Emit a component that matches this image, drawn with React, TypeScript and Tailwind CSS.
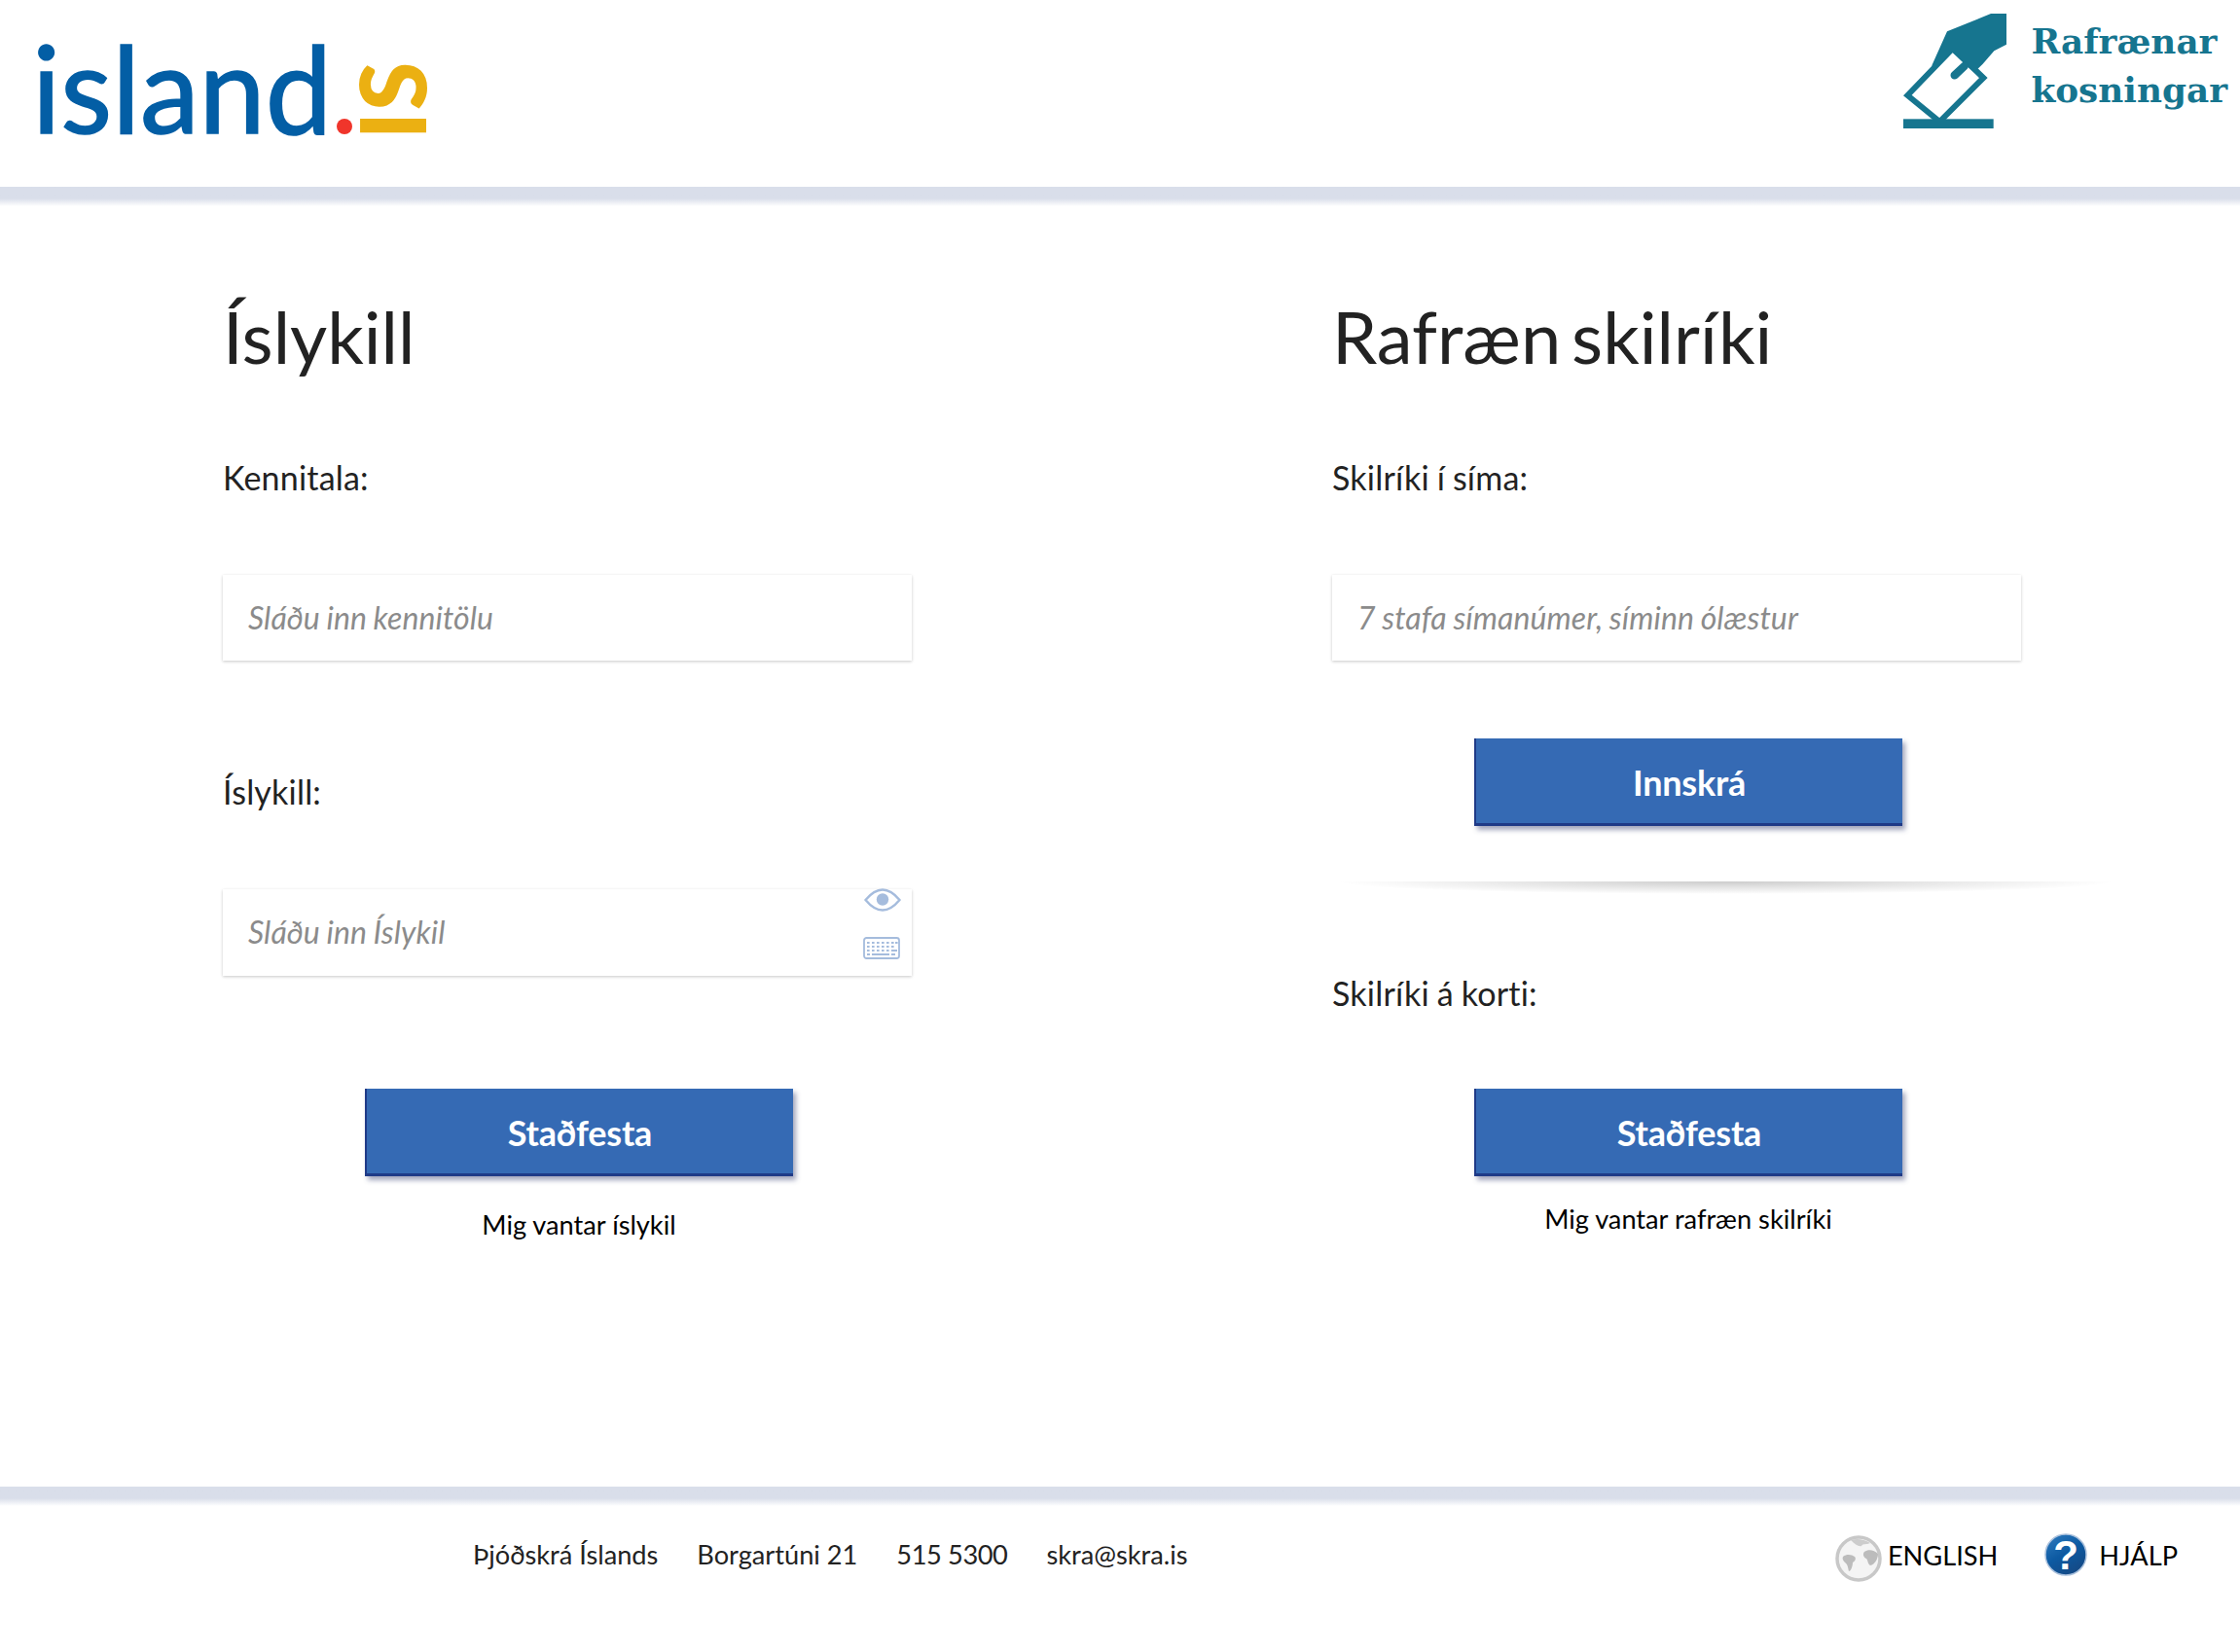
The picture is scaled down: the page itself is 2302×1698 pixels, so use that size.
import { Fragment } from 'react';

function IslandLogo() {
  return (
    <svg width="500" height="192" viewBox="0 0 500 192">
      <text x="33" y="137" fontFamily="Lato, sans-serif" fontSize="125" fill="#035ea5" stroke="#035ea5" strokeWidth="1.6" textLength="308" lengthAdjust="spacingAndGlyphs">island</text>
      <circle cx="354" cy="130" r="8" fill="#f0352b" />
      <text transform="translate(438 144) rotate(-90)" fontFamily="Lato, sans-serif" fontWeight="700" fontSize="132" fill="#ebb012" textLength="81" lengthAdjust="spacingAndGlyphs">ıs</text>
    </svg>
  );
}

function BallotLogo() {
  return (
    <svg width="118" height="120" viewBox="0 0 354 360">
      {/* ballot paper */}
      <path d="M13 252 L152 108 L247 198 L112 333 Z" fill="#fff" stroke="#16758f" strokeWidth="18" strokeLinejoin="miter" />
      {/* hand */}
      <path d="M135 55 L270 0 L318 0 L318 95 L280 115 L245 155 L222 178 L152 118 L96 172 L88 160 Z" fill="#16758f" />
      <path d="M188 162 L158 190" stroke="#16758f" strokeWidth="25" strokeLinecap="round" fill="none" />
      <rect x="0" y="325" width="278" height="29" fill="#16758f" />
    </svg>
  );
}

function Eye() {
  return (
    <svg width="38" height="24" viewBox="0 0 38 24">
      <path d="M1.5 12 C9 3 14 1.5 19 1.5 C24 1.5 29 3 36.5 12 C29 21 24 22.5 19 22.5 C14 22.5 9 21 1.5 12 Z" fill="none" stroke="#a5bcdd" strokeWidth="2.4" />
      <circle cx="19" cy="11.5" r="6.2" fill="#a5bcdd" />
    </svg>
  );
}

function Keyboard() {
  const rows = [
    [4, 9, 14, 19, 24, 29, 33],
    [4, 9, 14, 19, 24, 29],
    [4, 9, 14, 19, 24],
  ];
  return (
    <svg width="38" height="23" viewBox="0 0 38 23">
      <rect x="1" y="1" width="36" height="21" rx="2.5" fill="none" stroke="#a5bcdd" strokeWidth="1.8" />
      {rows.map((xs, r) => (
        <Fragment key={r}>
          {xs.map((x) => (
            <rect key={x} x={x} y={5 + r * 4} width="2.6" height="2" fill="#a5bcdd" />
          ))}
        </Fragment>
      ))}
      <rect x="29" y="13" width="6" height="2" fill="#a5bcdd" />
      <rect x="4" y="17" width="3" height="2" fill="#a5bcdd" />
      <rect x="9" y="17" width="18" height="2" fill="#a5bcdd" />
      <rect x="29" y="17" width="4" height="2" fill="#a5bcdd" />
    </svg>
  );
}

function Globe() {
  return (
    <svg width="48" height="48" viewBox="0 0 48 48">
      <circle cx="24" cy="24" r="22" fill="#f4f4f4" stroke="#c8c8c8" strokeWidth="3.5" />
      {/* continents */}
      <path d="M8 22 C12 19 17 20 20 22 C22 24 20 27 18 28 C18 32 16 37 14 37 C13 33 13 30 10 28 C8 26 7 24 8 22 Z" fill="#bcbcbc" />
      <path d="M16 5 C22 3 30 4 36 8 C32 10 29 8 27 11 C24 12 20 9 16 5 Z" fill="#cccccc" />
      <path d="M30 17 C34 14 40 15 44 19 C44 24 41 30 36 31 C33 29 34 26 32 24 C29 23 28 19 30 17 Z" fill="#bcbcbc" />
    </svg>
  );
}

function HelpIcon() {
  return (
    <svg width="44" height="44" viewBox="0 0 44 44" className="overflow-visible">
      <defs>
        <linearGradient id="helpFill" x1="0" y1="0" x2="0.6" y2="1">
          <stop offset="0%" stopColor="#2f7cc0" />
          <stop offset="55%" stopColor="#0d5aa2" />
          <stop offset="100%" stopColor="#144a86" />
        </linearGradient>
      </defs>
      <circle cx="22" cy="22" r="21" fill="url(#helpFill)" stroke="#a9c0dc" strokeWidth="1.5" />
      <text x="22" y="37" textAnchor="middle" fontFamily="Liberation Sans, sans-serif" fontWeight="700" fontSize="42" fill="#fff">?</text>
    </svg>
  );
}

function Band() {
  return <div className="h-[20px] bg-gradient-to-b from-[#d9deea] from-60% to-white" />;
}

function Label({ children, className }: { children: string; className: string }) {
  return <div className={`h-[40px] text-[34px] leading-[40px] tracking-[0.2px] [word-spacing:-1px] text-[#222] ${className}`}>{children}</div>;
}

function Field({ placeholder, className, children }: { placeholder: string; className: string; children?: React.ReactNode }) {
  return (
    <div className={`relative w-[708px] bg-white shadow-[0_1px_3px_rgba(0,0,0,0.22)] ${className}`}>
      <input
        placeholder={placeholder}
        className="h-full w-full bg-transparent pb-[2px] pl-[26px] text-[32px] italic tracking-[0.1px] [word-spacing:-1px] outline-none placeholder:text-[#8b8b8b] placeholder:opacity-100"
      />
      {children}
    </div>
  );
}

function BlueButton({ children, className }: { children: string; className: string }) {
  return (
    <button className={`block h-[90px] w-[440px] border-b-[3px] border-l-[2px] border-[#1f3a87] bg-[#356ab4] pt-[2px] text-[36px] font-bold tracking-[-0.2px] text-white shadow-[3px_4px_5px_rgba(50,60,110,0.45)] ${className}`}>
      {children}
    </button>
  );
}

export default function App() {
  return (
    <div className="h-[1698px] w-[2302px] overflow-hidden bg-white font-['Lato',sans-serif]">
      <header className="flex h-[192px] justify-between">
        <IslandLogo />
        <div className="flex pr-[13px] pt-[14px]">
          <BallotLogo />
          <div className="ml-[13px] mt-[3px] flex flex-col font-['DejaVu_Serif',serif] text-[35.8px] font-bold leading-[50px] text-[#16758f]">
            <span>Rafrænar</span>
            <span>kosningar</span>
          </div>
        </div>
      </header>
      <Band />

      <main className="grid h-[1316px] grid-cols-[1140px_1fr] pl-[229px]">
        <section>
          <h1 className="mt-[89px] h-[90px] text-[74px] leading-[90px] text-[#222]">Íslykill</h1>
          <Label className="mt-[80px]">Kennitala:</Label>
          <Field placeholder="Sláðu inn kennitölu" className="mt-[80px] h-[88px]" />
          <Label className="mt-[115px]">Íslykill:</Label>
          <Field placeholder="Sláðu inn Íslykil" className="mt-[80px] h-[89px]">
            <span className="absolute right-[11px] top-[-1px]"><Eye /></span>
            <span className="absolute right-[12px] top-[49px]"><Keyboard /></span>
          </Field>
          <BlueButton className="ml-[146px] mt-[116px]">Staðfesta</BlueButton>
          <p className="ml-[146px] mt-[35px] w-[440px] text-center text-[27.2px] leading-[30px] text-black">Mig vantar íslykil</p>
        </section>

        <section>
          <h1 className="mt-[89px] h-[90px] text-[74px] leading-[90px] [word-spacing:-8px] text-[#222]">Rafræn skilríki</h1>
          <Label className="mt-[80px]">Skilríki í síma:</Label>
          <Field placeholder="7 stafa símanúmer, síminn ólæstur" className="mt-[80px] h-[88px]" />
          <BlueButton className="ml-[146px] mt-[80px]">Innskrá</BlueButton>
          <div className="ml-[5px] mt-[57px] h-[13px] w-[800px] bg-[radial-gradient(ellipse_50%_100%_at_50%_0%,rgba(0,0,0,0.2),transparent)]" />
          <Label className="mt-[82px]">Skilríki á korti:</Label>
          <BlueButton className="ml-[146px] mt-[78px]">Staðfesta</BlueButton>
          <p className="ml-[146px] mt-[29px] w-[440px] text-center text-[27.2px] leading-[30px] text-black">Mig vantar rafræn skilríki</p>
        </section>
      </main>

      <Band />
      <footer className="flex items-start justify-between pl-[486px] pr-[64px]">
        <div className="mt-[33px] flex gap-[40px] text-[27.2px] leading-[34px] text-[#222]">
          <span>Þjóðskrá Íslands</span>
          <span>Borgartúni 21</span>
          <span className="tracking-[-0.4px]">515 5300</span>
          <span>skra@skra.is</span>
        </div>
        <div className="flex text-[27.2px] leading-[34px] text-black">
          <span className="mt-[30px]"><Globe /></span>
          <span className="ml-[6px] mt-[34px]">ENGLISH</span>
          <span className="ml-[48px] mt-[28px]"><HelpIcon /></span>
          <span className="ml-[12px] mt-[34px]">HJÁLP</span>
        </div>
      </footer>
    </div>
  );
}
